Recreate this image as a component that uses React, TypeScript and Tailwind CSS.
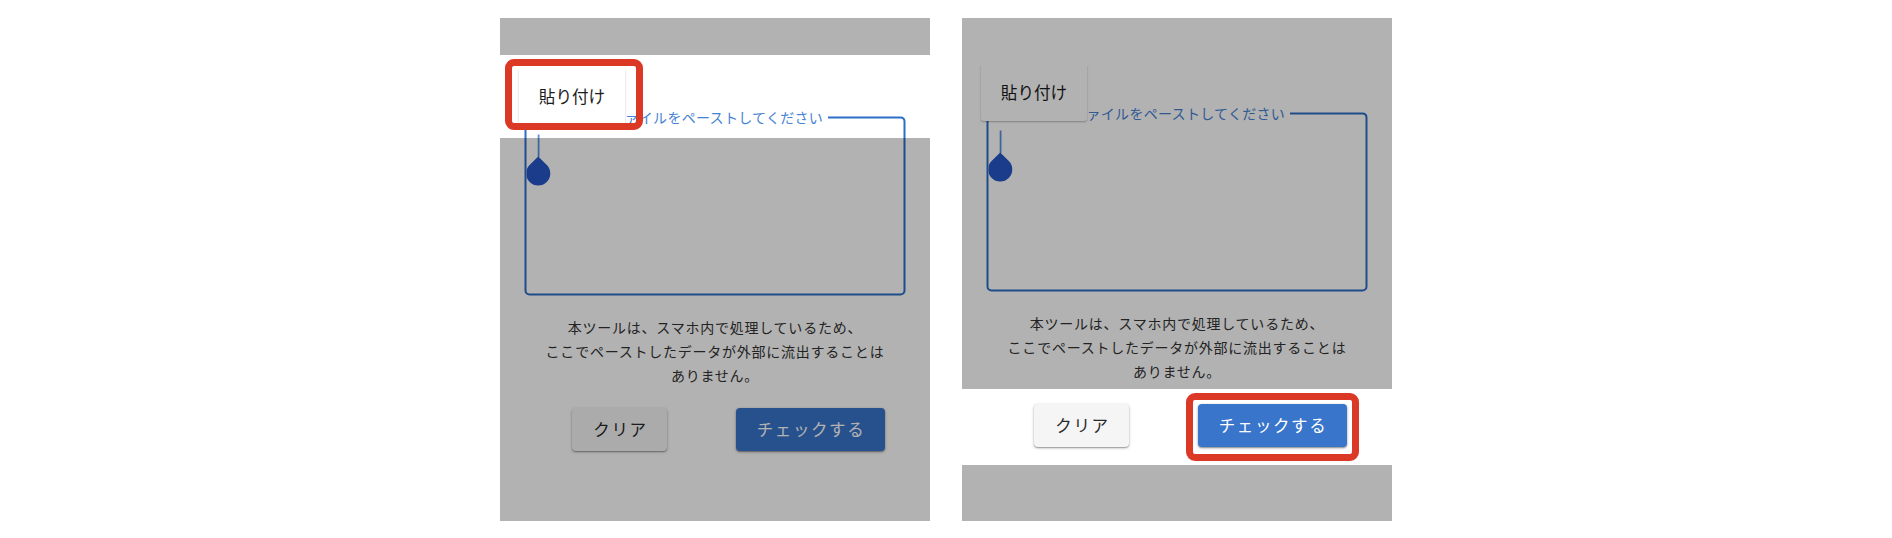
import clsx from 'clsx';

type Step = 'paste' | 'check';

function CaretHandle() {
  return (
    <svg className="absolute top-[4px] left-0 h-[54px] w-[28px]" viewBox="0 0 28 54" aria-hidden="true">
      <path d="M12.1 1V23.5" stroke="#5a93dc" strokeWidth="1.8" />
      <path d="M11.7 23.2L20.3 31.6A12.1 12.1 0 1 1 3.1 31.6Z" fill="#2657c8" />
    </svg>
  );
}

function ToolScreen({ step }: { step: Step }) {
  const paste = step === 'paste';
  return (
    <section className="relative h-[503px] w-[430px] overflow-hidden bg-white">
      <div className={clsx('flex flex-col', paste ? 'pt-[87px]' : 'pt-[83px]')}>
        <div className="relative mx-[24px]">
          <fieldset className="h-[190px] w-[381px] translate-x-[0.5px] translate-y-[0.4px] rounded-[5px] border-2 border-[#2c6ec8] shadow-[0_0_1px_rgba(44,110,200,0)]">
            <legend className="ml-[6px] pr-[4px] pl-[92px] text-[14px] leading-[24px] tracking-[0.3px] whitespace-nowrap text-[#4582d4]">
              ァイルをペーストしてください
            </legend>
            <div className="relative">
              <CaretHandle />
            </div>
          </fieldset>
          <div className="absolute -top-[36px] -left-[5px] flex h-[56px] w-[106px] items-center justify-center rounded-b-[3px] bg-white pb-[2px] text-[16.6px] text-[#1c1c1c] shadow-[0_1px_2px_rgba(0,0,0,0.28)] [clip-path:inset(0_-4px_-4px_-4px)]">
            貼り付け
          </div>
        </div>
        <p className="mt-[20px] text-center text-[14px] leading-[24px] tracking-[0.76px] text-[#333]">
          本ツールは、スマホ内で処理しているため、
          <br />
          ここでペーストしたデータが外部に流出することは
          <br />
          ありません。
        </p>
        <div className="mt-[20.5px] flex gap-[69px] pl-[72px] text-[16.5px] tracking-[1.6px]">
          <button className="h-[43px] w-[95px] rounded-[4px] bg-[#f5f5f5] pt-px pl-[2px] text-[#2a2a2a] shadow-[0_1px_3px_rgba(0,0,0,0.3),0_1px_1px_rgba(0,0,0,0.2)]">
            クリア
          </button>
          <button className="h-[43px] w-[149px] rounded-[4px] bg-[#3875cb] pt-px pl-px text-white shadow-[0_1px_3px_rgba(0,0,0,0.35),0_1px_1px_rgba(0,0,0,0.2)]">
            チェックする
          </button>
        </div>
      </div>
      <div className="absolute inset-0 flex flex-col">
        <div className={clsx('bg-black/30', paste ? 'h-[37px]' : 'h-[371px]')} />
        <div className={clsx(paste ? 'h-[83px]' : 'h-[76px]')} />
        <div className="flex-1 bg-black/30" />
      </div>
      <div
        className={clsx(
          'absolute rounded-[9px] border-[7px] border-[#dc3826]',
          paste ? 'top-[41px] left-[5px] h-[71px] w-[138px]' : 'top-[375px] left-[224px] h-[68px] w-[173px]',
        )}
      />
    </section>
  );
}

export default function App() {
  return (
    <main className="flex h-[538px] w-[1892px] justify-center gap-[32px] bg-white pt-[18px] font-['Noto_Sans_CJK_JP',sans-serif]">
      <ToolScreen step="paste" />
      <ToolScreen step="check" />
    </main>
  );
}
